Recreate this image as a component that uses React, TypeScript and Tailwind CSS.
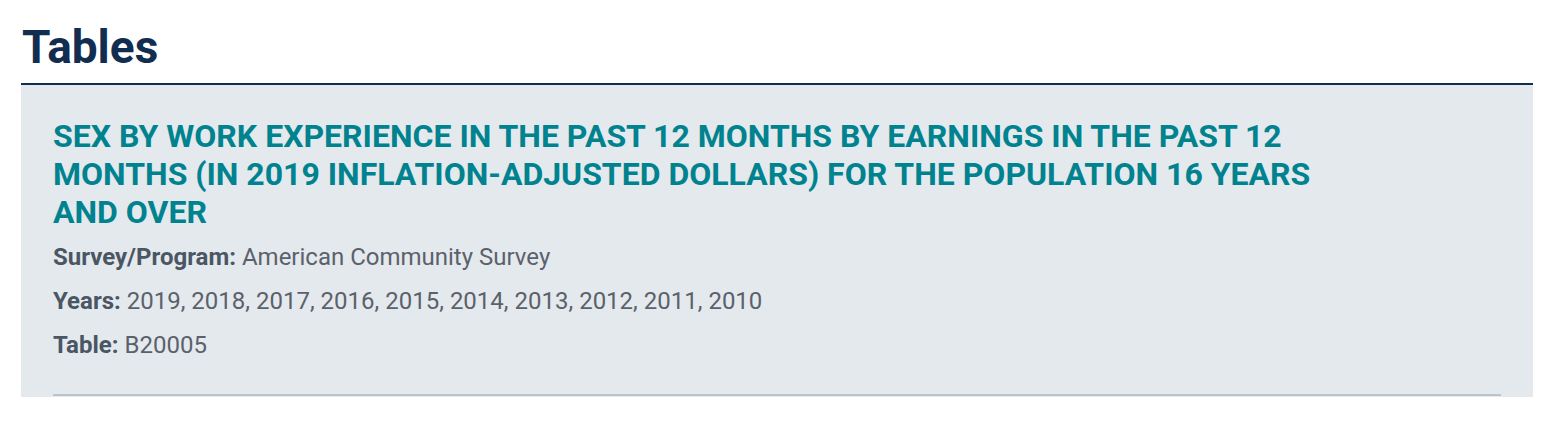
const meta = [
  { label: "Survey/Program:", value: "American Community Survey" },
  {
    label: "Years:",
    value: "2019, 2018, 2017, 2016, 2015, 2014, 2013, 2012, 2011, 2010",
  },
  { label: "Table:", value: "B20005" },
];

export default function App() {
  return (
    <div className="min-h-[425px] bg-white font-['Roboto',sans-serif]">
      <div className="px-[21px] pt-[20px]">
        <h1 className="pl-px text-[46px] font-bold leading-[54px] text-[#112e51]">
          Tables
        </h1>
        <div className="mt-[9px] mr-[6px] border-t-2 border-[#112e51] bg-[#e4e9ee] px-[32px] pt-[32px] pb-px">
          <h2 className="w-[1285px] text-[32px] font-bold uppercase leading-[38px] text-[#00838f]">
            Sex by Work Experience in the Past 12 Months by Earnings in the Past
            12 Months (in 2019 Inflation-Adjusted Dollars) for the Population 16
            Years and Over
          </h2>
          <div className="mt-[12px] flex flex-col gap-[16px] pb-[35px] text-[24px] leading-[28px] text-[#5b616b]">
            {meta.map((m) => (
              <div key={m.label}>
                <span className="font-bold text-[#4a5663]">{m.label}</span>{" "}
                {m.value}
              </div>
            ))}
          </div>
          <div className="h-[2px] bg-[#b9c4cc]" />
        </div>
      </div>
    </div>
  );
}
